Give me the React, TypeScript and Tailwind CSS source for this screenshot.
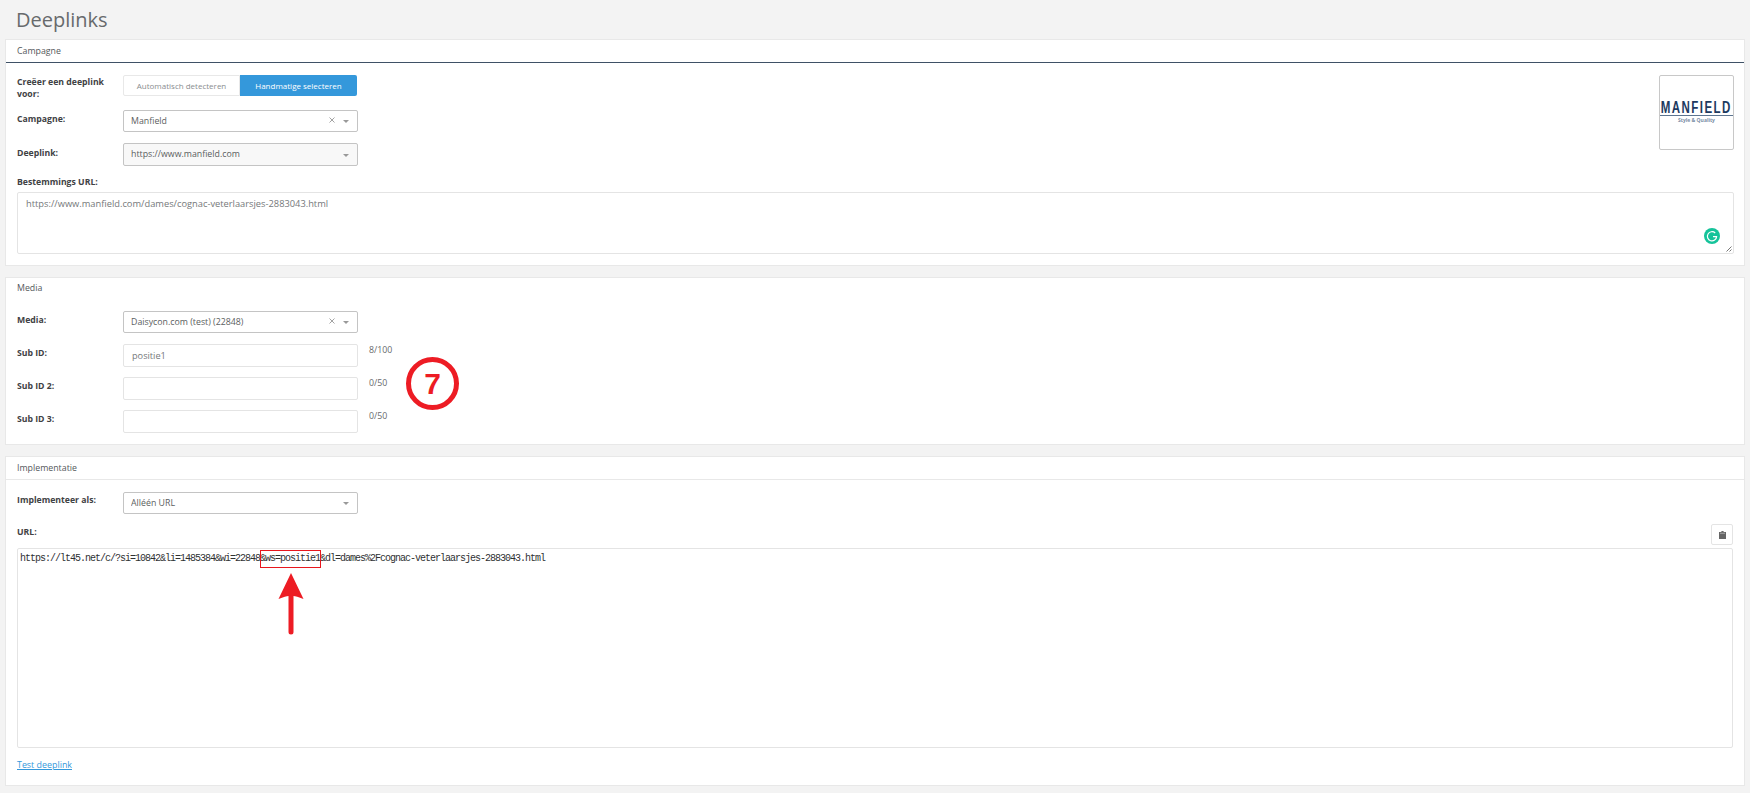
import { ReactNode } from 'react';

const OPEN_SANS = "font-['Open_Sans',_'Liberation_Sans',_sans-serif]";

function Caret() {
  return (
    <svg width="6" height="3" viewBox="0 0 6 3" className="ml-[8px] mt-px">
      <path d="M0 0h6L3 3z" fill="#999" />
    </svg>
  );
}

function Clear() {
  return (
    <svg width="6" height="6" viewBox="0 0 6 6" className="mb-[2px]">
      <path d="M0.5 0.5l5 5M5.5 0.5l-5 5" stroke="#999" strokeWidth="0.9" fill="none" />
    </svg>
  );
}

function Select({
  value,
  clearable = false,
  muted = false,
  className = 'h-[22px]',
}: {
  value: string;
  clearable?: boolean;
  muted?: boolean;
  className?: string;
}) {
  return (
    <div
      className={`flex w-[235px] items-center rounded-[2px] border border-[#c4c4c4] pl-[7px] pr-[8px] text-[8.8px] text-[#5b5e60] ${
        muted ? 'bg-[#f8f8f8]' : 'bg-white'
      } ${className}`}
    >
      <span className="flex-1 truncate pt-px">{value}</span>
      {clearable && <Clear />}
      <Caret />
    </div>
  );
}

function Label({ children, className = '' }: { children: ReactNode; className?: string }) {
  return (
    <div className={`w-[106px] shrink-0 text-[8.7px] font-bold leading-[12px] text-[#3f4244] ${className}`}>
      {children}
    </div>
  );
}

function Card({
  title,
  headerClass,
  className = '',
  children,
}: {
  title: string;
  headerClass: string;
  className?: string;
  children: ReactNode;
}) {
  return (
    <section className={`mx-[5px] w-[1740px] border border-[#e8e8e8] bg-white ${className}`}>
      <div className={`flex items-center px-[11px] text-[8.8px] text-[#54585b] ${headerClass}`}>{title}</div>
      {children}
    </section>
  );
}

function SubIdRow({
  label,
  value,
  count,
  className,
}: {
  label: string;
  value?: string;
  count: string;
  className: string;
}) {
  return (
    <div className={`flex ${className}`}>
      <Label className="mt-[3px]">{label}</Label>
      <div className="flex h-[23px] w-[235px] items-center rounded-[2px] border border-[#e4e4e4] bg-white pl-[8px] text-[9.2px] text-[#75787a]">
        {value}
      </div>
      <div className="ml-[11px] text-[8.8px] leading-[12px] text-[#676a6c]">{count}</div>
    </div>
  );
}

export default function App() {
  return (
    <div className={`${OPEN_SANS} h-[793px] w-[1750px] overflow-hidden bg-[#f3f3f3]`}>
      <h1 className="flex h-[39px] items-center pl-[16px] text-[20px] font-normal text-[#676a6c]">Deeplinks</h1>

      <Card title="Campagne" headerClass="h-[23px] border-b border-[#3f5166] pt-px" className="h-[227px]">
        <div className="flex justify-between pl-[11px] pr-[10px] pt-[12px]">
          <div>
            <div className="flex">
              <Label className="mt-[1px]">
                Creëer een deeplink
                <br />
                voor:
              </Label>
              <div className="flex h-[21px] text-[8px]">
                <div className="flex w-[117px] items-center justify-center rounded-l-[2px] border border-[#e8e8e8] text-[#8a8d8f]">
                  Automatisch detecteren
                </div>
                <div className="flex w-[117px] items-center justify-center rounded-r-[2px] bg-[#3498db] text-white">
                  Handmatige selecteren
                </div>
              </div>
            </div>
            <div className="mt-[10px] flex">
              <Label className="mt-[3px]">Campagne:</Label>
              <Select value="Manfield" clearable />
            </div>
            <div className="mt-[11px] flex">
              <Label className="mt-[4px]">Deeplink:</Label>
              <Select value="https://www.manfield.com" muted className="h-[23px]" />
            </div>
          </div>
          <div className="flex h-[75px] w-[75px] flex-col items-center justify-center rounded-[2px] border border-[#c8c8c8] bg-white pb-px">
            <div className="flex h-[15px] w-[73px] items-center justify-center border-b border-[#5d7590] font-['Liberation_Sans',_sans-serif] text-[16px] font-bold text-[#1d3a5f]">
              <span className="inline-block scale-x-[0.72] whitespace-nowrap tracking-[2px]">MANFIELD</span>
            </div>
            <div className="mt-px text-[5px] font-bold leading-[6px] text-[#7a8ea5]">Style &amp; Quality</div>
          </div>
        </div>
        <div className="pl-[11px] pr-[10px]">
          <div className="mt-[10px] text-[8.7px] font-bold leading-[12px] text-[#3f4244]">Bestemmings URL:</div>
          <div className="relative mt-[4px] h-[62px] rounded-[2px] border border-[#e4e4e4] px-[8px] pt-[4px] text-[9.3px] leading-[14px] text-[#75787a]">
            https://www.manfield.com/dames/cognac-veterlaarsjes-2883043.html
            <svg width="16" height="16" viewBox="0 0 16 16" className="absolute bottom-[9px] right-[13px]">
              <circle cx="8" cy="8" r="8" fill="#15c39a" />
              <path d="M11.2 5A4.6 4.6 0 1 0 12.6 8.6H9" stroke="#fff" strokeWidth="1.2" fill="none" />
            </svg>
            <svg width="6" height="6" viewBox="0 0 6 6" className="absolute bottom-[1px] right-[1px]">
              <path d="M0.5 5.5l5-5M3.5 5.5l2-2" stroke="#555" strokeWidth="0.8" fill="none" />
            </svg>
          </div>
        </div>
      </Card>

      <Card title="Media" headerClass="h-[21px]" className="relative mt-[11px] h-[168px]">
        <div className="px-[11px] pt-[12px]">
          <div className="flex">
            <Label className="mt-[3px]">Media:</Label>
            <Select value="Daisycon.com (test) (22848)" clearable />
          </div>
          <SubIdRow label="Sub ID:" value="positie1" count="8/100" className="mt-[11px]" />
          <SubIdRow label="Sub ID 2:" count="0/50" className="mt-[10px]" />
          <SubIdRow label="Sub ID 3:" count="0/50" className="mt-[10px]" />
        </div>
        {/* Annotation drawn over the card */}
        <div className="absolute left-[400px] top-[79px] flex h-[53px] w-[53px] items-center justify-center rounded-full border-[5px] border-[#ed1c24] font-['Liberation_Sans',_sans-serif] text-[30px] font-bold text-[#ed1c24]">
          7
        </div>
      </Card>

      <Card title="Implementatie" headerClass="h-[23px] border-b border-[#e8e8e8] pt-px" className="relative mt-[11px] h-[330px]">
        <div className="px-[11px] pt-[12px]">
          <div className="flex">
            <Label className="mt-[2px]">Implementeer als:</Label>
            <Select value="Alléén URL" />
          </div>
          <div className="mt-[10px] flex h-[21px] items-start justify-between">
            <div className="mt-[2px] text-[8.7px] font-bold leading-[12px] text-[#3f4244]">URL:</div>
            <div className="flex h-[21px] w-[22px] items-center justify-center rounded-[2px] border border-[#e4e4e4]">
              <svg width="7" height="8" viewBox="0 0 7 8">
                <path d="M2.4 0h2.2v1H7v7H0V1h2.4z" fill="#666" />
                <path d="M1 1.8h5v.8H1z" fill="#bbb" />
              </svg>
            </div>
          </div>
          <div className="mt-[3px] h-[200px] rounded-[2px] border border-[#e4e4e4] pl-[2px] pt-[3px] font-['Liberation_Mono',_monospace] text-[10px] leading-[14px] tracking-[-1px] text-[#2f3133]">
            https://lt45.net/c/?si=10842&amp;li=1485384&amp;wi=22848&amp;ws=positie1&amp;dl=dames%2Fcognac-veterlaarsjes-2883043.html
          </div>
          <a className="mt-[11px] inline-block text-[8.9px] leading-[12px] text-[#3498db] underline">Test deeplink</a>
        </div>
        {/* Annotations drawn over the card */}
        <div className="absolute left-[254px] top-[93px] h-[18px] w-[61px] border border-[#e8161d]" />
        <svg width="26" height="62" viewBox="0 0 26 62" className="absolute left-[272px] top-[116px]">
          <path d="M13 0L25.5 26Q18 23 15.5 23V59a2.5 2.5 0 0 1-5 0V23Q8 23 0.5 26z" fill="#ed1c24" />
        </svg>
      </Card>
    </div>
  );
}
